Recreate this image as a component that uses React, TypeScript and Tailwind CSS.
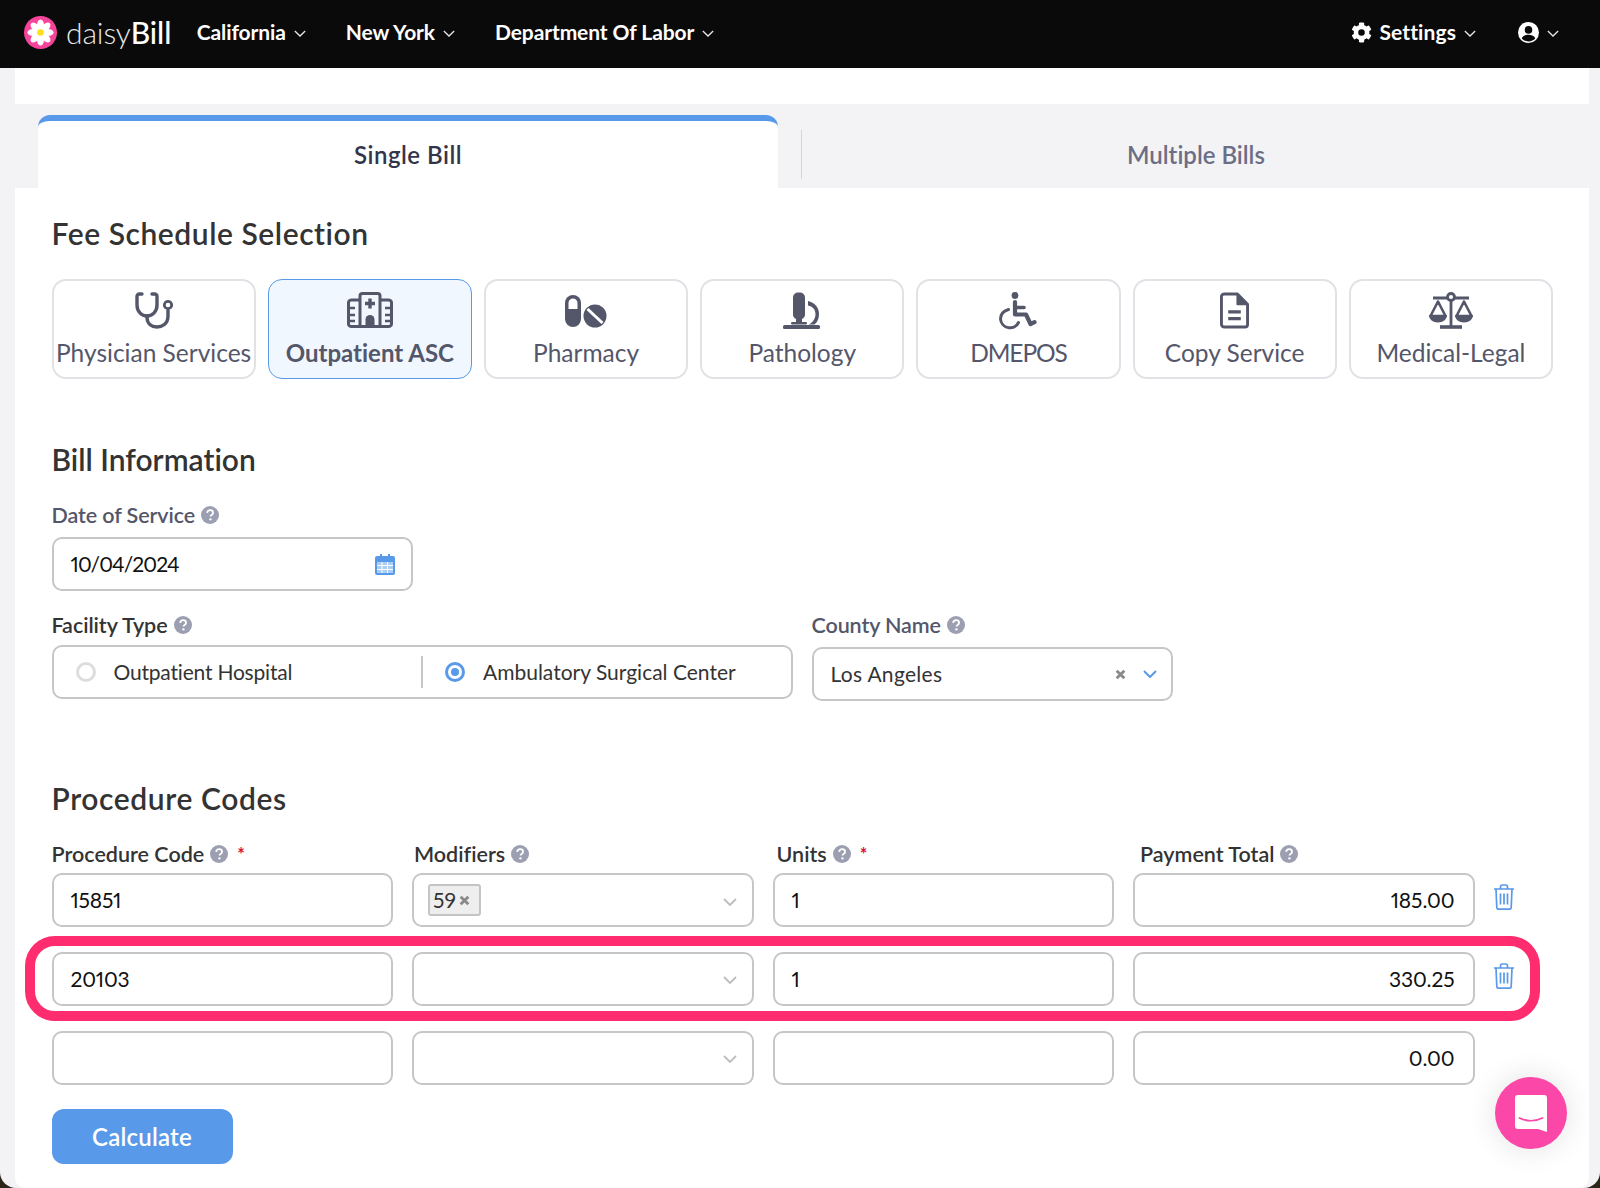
import React from "react";

const Chevron = ({ className = "", w = 1.5 }: { className?: string; w?: number }) => (
  <svg viewBox="0 0 14 8" className={className} fill="none" stroke="currentColor" strokeWidth={w}>
    <path d="M1 1l6 6 6-6" />
  </svg>
);

const BoldX = ({ className = "" }: { className?: string }) => (
  <svg viewBox="0 0 10 10" className={className} fill="none" stroke="currentColor" strokeWidth="2.600">
    <path d="M1.500 1.500l7 7M8.500 1.500l-7 7" />
  </svg>
);

const Help = () => (
  <svg viewBox="0 0 20 20" className="w-[18px] h-[18px] ml-[6px] text-[#9c9eb1]">
    <circle cx="10" cy="10" r="10" fill="currentColor" />
    <path d="M6.800 7.600c.2-1.900 1.500-3 3.400-3 1.800 0 3.200 1.100 3.200 2.800 0 1.400-.8 2-1.700 2.600-.8.500-1.100.8-1.100 1.700" fill="none" stroke="#fff" strokeWidth="2" />
    <circle cx="10.500" cy="14.800" r="1.300" fill="#fff" />
  </svg>
);

const Req = () => <span className="ml-[9px] text-[#e0103a] text-[18px] leading-none font-bold">*</span>;

const Stetho = () => (
  <svg viewBox="0 0 38 37" className="w-[38px] h-[37px] text-[#54566a]" fill="none" stroke="currentColor" strokeWidth="3.400" strokeLinecap="round">
    <path d="M7 2H4.500Q2 2 2 4.500V13C2 20 7 24 12 24S22 20 22 13V4.500Q22 2 19.500 2H17" />
    <path d="M12 24v1C12 32 17 35 22 35S33 32 33 24V18.500" />
    <circle cx="33" cy="13" r="3.700" strokeWidth="2.800" />
  </svg>
);
const Hospital = () => (
  <svg viewBox="0 0 46 36" className="w-[46px] h-[36px] text-[#54566a]" fill="none" stroke="currentColor" strokeWidth="3">
    <path d="M13 8V4C13 2.500 14 1.500 15.500 1.500h15C32 1.500 33 2.500 33 4V8h8.500C43 8 44.500 9 44.500 10.500v21.500c0 1.500-1.500 2.500-3 2.500h-37c-1.500 0-3-1-3-2.500V10.500C1.500 9 3 8 4.500 8zM13 8v26.500M33 8v26.500" strokeLinejoin="round" />
    <path d="M23 6.500v10M18 11.500h10" strokeWidth="3.400" />
    <path d="M2 16h6M2 23h6M2 29h6M38 16h6M38 23h6M38 29h6" strokeWidth="2.600" />
    <path d="M18.500 34.500v-7a4.500 4.500 0 0 1 9 0v7z" fill="currentColor" stroke="none" />
  </svg>
);
const Pills = () => (
  <svg viewBox="0 0 42 36" className="w-[42px] h-[36px] text-[#54566a]">
    <path d="M8 2a8 8 0 0 1 8 8v16a8 8 0 0 1-16 0V10a8 8 0 0 1 8-8z" fill="currentColor" />
    <path d="M3.500 16V10a4.500 4.500 0 0 1 9 0v6z" fill="#fff" />
    <circle cx="30" cy="23" r="11.500" fill="currentColor" />
    <path d="M22.500 16l15 14" stroke="#fff" strokeWidth="3" />
  </svg>
);
const Microscope = () => (
  <svg viewBox="0 0 38 37" className="w-[38px] h-[37px] text-[#54566a]" fill="currentColor">
    <rect x="10" y="0.500" width="12" height="27" rx="5" />
    <rect x="13" y="27" width="6" height="3" />
    <path d="M25 9c6.500 1.500 11 6 11 13 0 4.500-1.500 8-4.500 10.500h-6c4.500-2 7-6 7-10.500 0-4.500-2.800-7.500-7.500-8.500z" />
    <rect x="8" y="30" width="16" height="2.500" rx="1.200" />
    <rect x="0" y="33" width="37" height="4" rx="1.500" />
  </svg>
);
const Wheelchair = () => (
  <svg viewBox="0 0 40 38" className="w-[40px] h-[38px] text-[#54566a]">
    <circle cx="17" cy="3.500" r="3.400" fill="currentColor" />
    <path d="M17 10v12.500h11l4.500 9.500 4-1.800" fill="none" stroke="currentColor" strokeWidth="4.200" strokeLinejoin="round" strokeLinecap="round" />
    <path d="M17 15.500h9" stroke="currentColor" strokeWidth="3.600" strokeLinecap="round" />
    <path d="M10.500 17.500c-5 1.500-8 5.300-8 9.500a9.500 9.500 0 0 0 18 3.500" fill="none" stroke="currentColor" strokeWidth="3" strokeLinecap="round" />
  </svg>
);
const FileIcon = () => (
  <svg viewBox="0 0 30 37" className="w-[29px] h-[37px] text-[#54566a]" fill="none" stroke="currentColor" strokeWidth="3">
    <path d="M4.500 1.500H18L28.500 12v21c0 1.500-1 2.500-2.500 2.500H4.500C3 35.500 1.500 34.500 1.500 33V4C1.500 2.500 3 1.500 4.500 1.500z" strokeLinejoin="round" />
    <path d="M18 2v10h10z" fill="currentColor" strokeWidth="2" strokeLinejoin="round" />
    <path d="M8.500 20h13M8.500 27h13" strokeWidth="3.400" />
  </svg>
);
const Scale = () => (
  <svg viewBox="0 0 46 37" className="w-[46px] h-[37px] text-[#54566a]" fill="none" stroke="currentColor" strokeWidth="2.800">
    <path d="M5 6h14M27 6h14M23 9v26" />
    <circle cx="23" cy="5" r="3.500" />
    <path d="M12 35h22" strokeWidth="3.600" />
    <path d="M10 9.500L2.500 24h15zM36 9.500L28.500 24h15z" strokeLinejoin="round" strokeWidth="2.600" />
    <path d="M1 23h18c0 4.500-4 7.500-9 7.500S1 27.500 1 23zM27 23h18c0 4.500-4 7.500-9 7.500S27 27.500 27 23z" fill="currentColor" stroke="none" />
  </svg>
);

const Card = ({ icon, label, active, cls = "" }: { icon: React.ReactNode; label: string; active?: boolean; cls?: string }) => (
  <div
    className={
      active
        ? "h-[100px] rounded-[14px] border-[1.5px] border-[#5899e9] bg-[#f0f7ff] flex flex-col items-center pt-[11px]"
        : "h-[100px] rounded-[14px] border-2 border-[#e2e2e6] bg-white flex flex-col items-center pt-[10.500px]"
    }
  >
    <div className="h-[38px] flex items-center justify-center">{icon}</div>
    <div className={(active ? "mt-[7.500px] text-[24px] font-bold leading-[32px] text-[#54566a] whitespace-nowrap " : "mt-[7.500px] text-[24.500px] leading-[32px] text-[#54566a] whitespace-nowrap ") + cls}>
      {label}
    </div>
  </div>
);

const field = "h-[54px] rounded-[10px] border-2 border-[#c6c6c6] bg-white flex items-center text-[21px] text-[#111]";

const Trash = () => (
  <svg viewBox="0 0 22 26" className="w-[22px] h-[26px] text-[#5899e9]" fill="none" stroke="currentColor" strokeWidth="1.700">
    <path d="M1 5h20M7.500 5V2.800C7.500 1.800 8.300 1 9.300 1h3.400c1 0 1.800.8 1.800 1.800V5" />
    <path d="M3 5l.8 18.500c0 1 .8 1.700 1.700 1.700h11c1 0 1.700-.7 1.700-1.700L19 5" />
    <path d="M7.500 9.500v11M11 9.500v11M14.500 9.500v11" />
  </svg>
);

const TextField = ({ v, right }: { v?: string; right?: boolean }) => (
  <div className={field + (right ? " justify-end pr-[18px] tracking-[-0.1px]" : " pl-[17px] tracking-[-0.2px]")}>{v}</div>
);

const SelectField = ({ tag }: { tag?: boolean }) => (
  <div className={field + " pl-[14px] pr-[15px] justify-between"}>
    {tag ? (
      <span className="h-[32px] w-[53px] rounded-[3px] border-2 border-[#c4c4c4] bg-[#eeeeee] flex items-center pl-[3px] text-[#333]">
        59
        <BoldX className="w-[11px] h-[11px] ml-[3px] text-[#8a8a8a]" />
      </span>
    ) : (
      <span />
    )}
    <Chevron className="w-[14px] h-[8px] text-[#bdbdbd] mt-[3px]" w={1.8} />
  </div>
);

const Row = ({ a, t, b, c, trash }: { a?: string; t?: boolean; b?: string; c: string; trash?: boolean }) => (
  <div className="grid grid-cols-4 gap-x-[19px]">
    <TextField v={a} />
    <SelectField tag={t} />
    <TextField v={b} />
    <div className="relative">
      <TextField v={c} right />
      {trash && (
        <div className="absolute left-[360px] top-[11px]">
          <Trash />
        </div>
      )}
    </div>
  </div>
);

const Navitem = ({ label, className }: { label: string; className: string }) => (
  <div className={"flex items-center text-[21px] font-bold tracking-[-0.1px] text-white " + className}>
    {label}
    <Chevron className="w-[12px] h-[7px] ml-[8px] mt-[2px] text-[#e5e5e5]" />
  </div>
);

export default function App() {
  return (
    <div className="w-[1600px] h-[1188px] bg-[#2a2618]">
      <div className="w-[1600px] h-[1188px] overflow-hidden bg-[#f3f3f5] relative rounded-b-[16px] [font-family:Lato,'Liberation_Sans',sans-serif] [font-variant-ligatures:none] proportional-nums">
        <header className="h-[68px] bg-[#0a0a0a] flex items-center pl-[24px] pr-[41px] pb-[4px]">
          <svg viewBox="0 0 34 34" className="w-[33px] h-[33px] shrink-0">
            <circle cx="17" cy="17" r="17" fill="#f7449b" />
            {[0, 45, 90, 135, 180, 225, 270, 315].map((r) => (
              <ellipse key={r} cx="17" cy="9.500" rx="3.600" ry="6" fill="#fff" transform={`rotate(${r} 17 17)`} />
            ))}
            <circle cx="17" cy="17" r="3.400" fill="#ffdd1f" />
          </svg>
          <div className="ml-[9px] text-[30px] leading-none text-[#e8e8e8] font-light tracking-[-0.1px]">
            daisy<span className="font-medium text-white">Bill</span>
          </div>
          <Navitem label="California" className="ml-[25.500px]" />
          <Navitem label="New York" className="ml-[40px]" />
          <Navitem label="Department Of Labor" className="ml-[40px]" />
          <div className="ml-auto flex items-center">
            <svg viewBox="0 0 512 512" className="w-[21px] h-[21px] text-white" fill="currentColor">
              <path d="M487 315l-42-25c4-23 4-46 0-69l42-25c5-3 7-8 5-14-11-35-30-67-54-93-4-4-10-5-15-2l-42 25c-18-15-38-27-60-35V29c0-6-4-10-9-11-36-8-73-8-109 0-5 1-9 5-9 11v48c-22 8-42 20-60 35L92 87c-5-3-11-2-15 2-24 26-43 58-54 93-2 6 0 11 5 14l42 25c-4 23-4 46 0 69l-42 25c-5 3-7 8-5 14 11 35 30 67 54 93 4 4 10 5 15 2l42-25c18 15 38 27 60 35v48c0 6 4 10 9 11 36 8 73 8 109 0 5-1 9-5 9-11v-48c22-8 42-20 60-35l42 25c5 3 11 2 15-2 24-26 43-58 54-93 2-6 0-11-5-14zM256 336a80 80 0 1 1 0-160 80 80 0 0 1 0 160z" />
            </svg>
            <span className="ml-[7px] text-[21px] font-bold text-white tracking-[0.1px]">Settings</span>
            <Chevron className="w-[12px] h-[7px] ml-[8px] mt-[2px] text-[#e5e5e5]" />
            <svg viewBox="0 0 20 20" className="w-[21px] h-[21px] ml-[42px]">
              <circle cx="10" cy="10" r="10" fill="#fff" />
              <circle cx="10" cy="7.500" r="3.600" fill="#0a0a0a" />
              <path d="M3.500 15.500c1.500-2.500 3.800-3.300 6.500-3.300s5 .8 6.500 3.300C15 17.500 12.700 18.500 10 18.500s-5-1-6.500-3z" fill="#0a0a0a" />
            </svg>
            <Chevron className="w-[12px] h-[7px] ml-[8px] mt-[2px] text-[#e5e5e5]" />
          </div>
        </header>

        <div className="h-[36px] ml-[15px] mr-[11px] bg-white" />

        <div className="h-[84px] pl-[38px] flex items-end">
          <div className="w-[740px] h-[73px] rounded-t-[12px] bg-white border-t-[6px] border-[#5899e9] flex items-center justify-center text-[24px] font-semibold text-[#33364a] tracking-[0.5px]">
            <span className="mb-[0px]">Single Bill</span>
          </div>
          <div className="w-px h-[49px] bg-[#d5d5da] ml-[23px] mb-[9px]" />
          <div className="w-[788px] h-[67px] flex items-center justify-center text-[24px] font-semibold text-[#6b6e85]">
            <span className="mb-[-1px]">Multiple Bills</span>
          </div>
        </div>

        <main className="ml-[15px] mr-[11px] h-[1000px] bg-white rounded-b-[10px] pl-[36.500px] pr-[36px]">
          <h2 className="pt-[25px] text-[30px] leading-[40px] font-semibold text-[#333] tracking-[0.55px]">Fee Schedule Selection</h2>
          <div className="mt-[26px] grid grid-cols-7 gap-x-3">
            <Card icon={<Stetho />} label="Physician Services" />
            <Card icon={<Hospital />} label="Outpatient ASC" active />
            <Card icon={<Pills />} label="Pharmacy" />
            <Card icon={<Microscope />} label="Pathology" />
            <Card icon={<Wheelchair />} label="DMEPOS" cls="tracking-[-1.100px]" />
            <Card icon={<FileIcon />} label="Copy Service" />
            <Card icon={<Scale />} label="Medical-Legal" />
          </div>

          <h2 className="mt-[60px] text-[30px] leading-[40px] font-semibold text-[#333]">Bill Information</h2>
          <div className="mt-[21px] flex items-center h-[30px] text-[21.500px] font-semibold text-[#54566a] tracking-[-0.1px]">
            Date of Service <Help />
          </div>
          <div className={field + " mt-[7px] w-[361.500px] pl-[17px] pr-[16px] justify-between"}>
            <span className="tracking-[-0.9px]">10/04/2024</span>
            <svg viewBox="0 0 20 22" className="w-[20px] h-[22px] text-[#5899e9]" fill="currentColor">
              <path d="M2 3h3V1h2v2h6V1h2v2h3a2 2 0 0 1 2 2v15a2 2 0 0 1-2 2H2a2 2 0 0 1-2-2V5a2 2 0 0 1 2-2z" />
              <path d="M2 9h16v11H2z" fill="#a9cdf5" />
              <path d="M7 9v11M12.500 9v11M2 12.500h16M2 16.500h16" stroke="#fff" strokeWidth="1" />
            </svg>
          </div>

          <div className="mt-[19px] flex gap-x-[18px]">
            <div className="w-[741.500px]">
              <div className="flex items-center h-[30px] text-[21.500px] font-semibold text-[#333] tracking-[-0.05px]">
                Facility Type <Help />
              </div>
              <div className="h-[54px] mt-[5px] rounded-[10px] border-2 border-[#c6c6c6] flex items-center text-[21px] text-[#333]">
                <div className="flex items-center w-[367.500px] pl-[22px]">
                  <span className="w-[20px] h-[20px] rounded-full border-[3.500px] border-[#dddddd] bg-white shrink-0" />
                  <span className="ml-[18px] tracking-[-0.2px]">Outpatient Hospital</span>
                </div>
                <div className="w-[2px] h-[32px] bg-[#c6c6c6]" />
                <div className="flex items-center pl-[22px]">
                  <span className="w-[20px] h-[20px] rounded-full border-[3px] border-[#5899e9] flex items-center justify-center shrink-0">
                    <span className="w-[8px] h-[8px] rounded-full bg-[#5899e9]" />
                  </span>
                  <span className="ml-[18px]">Ambulatory Surgical Center</span>
                </div>
              </div>
            </div>
            <div className="w-[361.500px] ml-[0.500px]">
              <div className="flex items-center h-[30px] text-[21.500px] font-semibold text-[#54566a] tracking-[-0.1px]">
                County Name <Help />
              </div>
              <div className={field + " mt-[7px] pl-[17px] pr-[14px] text-[#333] tracking-[0.3px]"}>
                Los Angeles
                <BoldX className="ml-auto w-[11px] h-[11px] text-[#8a8a8a]" />
                <Chevron className="w-[14px] h-[8px] ml-[17px] text-[#5899e9]" w={2} />
              </div>
            </div>
          </div>

          <h2 className="mt-[77px] text-[30px] leading-[40px] font-semibold text-[#333] tracking-[0.6px]">Procedure Codes</h2>
          <div className="mt-[19.500px] w-[1423px] grid grid-cols-4 gap-x-[19px] h-[30px] text-[21.500px] font-semibold text-[#333]">
            <div className="flex items-center">Procedure Code <Help /><Req /></div>
            <div className="flex items-center pl-[2px]">Modifiers <Help /></div>
            <div className="flex items-center pl-[4px]">Units <Help /><Req /></div>
            <div className="flex items-center pl-[7px]">Payment Total <Help /></div>
          </div>
          <div className="mt-[5.500px] flex flex-col gap-y-[24.800px] w-[1423px]">
            <Row a="15851" t b="1" c="185.00" trash />
            <div className="relative">
              <Row a="20103" b="1" c="330.25" trash />
              <div className="absolute left-[-27px] right-[-65px] top-[-16px] bottom-[-15px] rounded-[30px] border-[10px] border-[#ff2d6f] pointer-events-none" />
            </div>
            <Row c="0.00" />
          </div>
          <button className="mt-[24.500px] w-[181px] h-[55px] rounded-[12px] bg-[#5899e9] text-white text-[24px] font-semibold tracking-[0.2px]">Calculate</button>
        </main>

        <div className="absolute left-[1494.500px] top-[1077px] w-[72px] h-[72px] rounded-full bg-[#fb47a8] shadow-[0_0_30px_rgba(0,0,0,0.12)] flex items-center justify-center">
          <svg viewBox="0 0 32 37" className="w-[32px] h-[37px]">
            <path d="M3 0h26a3 3 0 0 1 3 3v34l-9-3H3a3 3 0 0 1-3-3V3a3 3 0 0 1 3-3z" fill="#fff" />
            <path d="M4.500 23c7 3.500 16 3.500 23 0" fill="none" stroke="#fb47a8" strokeWidth="1.800" strokeLinecap="round" />
          </svg>
        </div>
      </div>
    </div>
  );
}
